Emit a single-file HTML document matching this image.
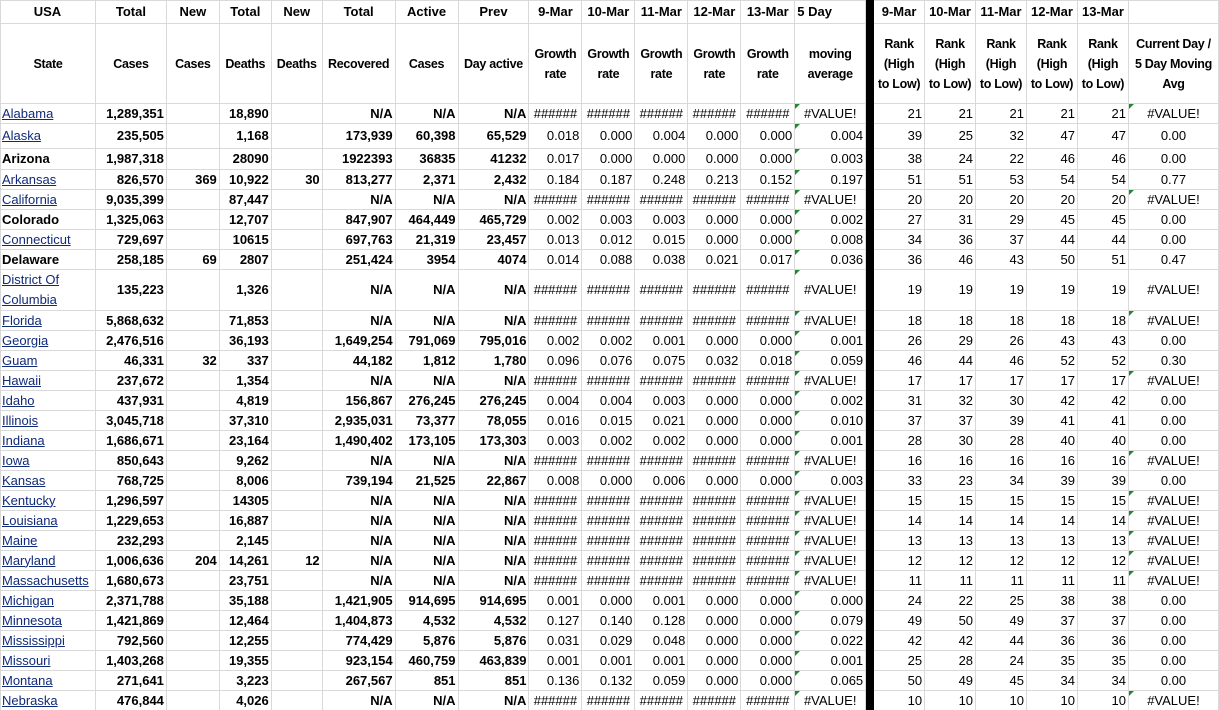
<!DOCTYPE html>
<html><head><meta charset="utf-8"><style>
html,body{margin:0;padding:0;background:#fff;width:1219px;height:710px;overflow:hidden}
table{border-collapse:collapse;table-layout:fixed;font-family:"Liberation Sans",Arial,sans-serif;font-size:13px;color:#000}
td{border:1px solid #d9d9d9;height:19px;padding:0 2px 0 2px;text-align:right;white-space:nowrap;overflow:hidden;line-height:18px;position:relative}
tr.h1 td{height:22px;text-align:center;font-weight:bold}
tr.h2 td{height:79px;text-align:center;font-weight:bold;line-height:20px;font-size:12.5px;letter-spacing:-0.3px;padding:0}
td:nth-child(1){text-align:left;padding-left:1px}
td:nth-child(n+2):nth-child(-n+8){font-weight:bold}
td:nth-child(15){background:#000;border-color:#000;padding:0}
td:nth-child(21){text-align:center}
td.c{text-align:center}
td.v{text-align:center}
tr.d td:nth-child(14)::before{content:"";position:absolute;left:0;top:0;border-top:5px solid #1e8a2e;border-right:5px solid transparent}
td.g::before{content:"";position:absolute;left:0;top:0;border-top:5px solid #1e8a2e;border-right:5px solid transparent}
a{color:#102a7a;text-decoration:underline}
td.b{font-weight:bold}
tr.r2 td{height:24px}
tr.r3 td{height:20px}
tr.dc td{height:40px;white-space:normal;line-height:20px}
</style></head><body>
<table>
<colgroup><col style="width:95px"><col style="width:71px"><col style="width:53px"><col style="width:52px"><col style="width:51px"><col style="width:73px"><col style="width:63px"><col style="width:71px"><col style="width:53px"><col style="width:53px"><col style="width:53px"><col style="width:53px"><col style="width:54px"><col style="width:71px"><col style="width:8px"><col style="width:51px"><col style="width:51px"><col style="width:51px"><col style="width:51px"><col style="width:51px"><col style="width:90px"></colgroup>
<tr class="h1"><td style="text-align:center">USA</td><td>Total</td><td>New</td><td>Total</td><td>New</td><td>Total</td><td>Active</td><td>Prev</td><td>9-Mar</td><td>10-Mar</td><td>11-Mar</td><td>12-Mar</td><td>13-Mar</td><td style="text-align:left">5 Day</td><td></td><td>9-Mar</td><td>10-Mar</td><td>11-Mar</td><td>12-Mar</td><td>13-Mar</td><td></td></tr>
<tr class="h2"><td style="text-align:center">State</td><td>Cases</td><td>Cases</td><td>Deaths</td><td>Deaths</td><td>Recovered</td><td>Cases</td><td>Day active</td><td>Growth<br>rate</td><td>Growth<br>rate</td><td>Growth<br>rate</td><td>Growth<br>rate</td><td>Growth<br>rate</td><td>moving<br>average</td><td></td><td>Rank<br>(High<br>to Low)</td><td>Rank<br>(High<br>to Low)</td><td>Rank<br>(High<br>to Low)</td><td>Rank<br>(High<br>to Low)</td><td>Rank<br>(High<br>to Low)</td><td>Current Day /<br>5 Day Moving<br>Avg</td></tr>
<tr class="d"><td><a>Alabama</a></td><td>1,289,351</td><td></td><td>18,890</td><td></td><td>N/A</td><td>N/A</td><td>N/A</td><td class="c">######</td><td class="c">######</td><td class="c">######</td><td class="c">######</td><td class="c">######</td><td class="v">#VALUE!</td><td></td><td>21</td><td>21</td><td>21</td><td>21</td><td>21</td><td class="g">#VALUE!</td></tr>
<tr class="d r2"><td><a>Alaska</a></td><td>235,505</td><td></td><td>1,168</td><td></td><td>173,939</td><td>60,398</td><td>65,529</td><td>0.018</td><td>0.000</td><td>0.004</td><td>0.000</td><td>0.000</td><td>0.004</td><td></td><td>39</td><td>25</td><td>32</td><td>47</td><td>47</td><td>0.00</td></tr>
<tr class="d r3"><td class="b">Arizona</td><td>1,987,318</td><td></td><td>28090</td><td></td><td>1922393</td><td>36835</td><td>41232</td><td>0.017</td><td>0.000</td><td>0.000</td><td>0.000</td><td>0.000</td><td>0.003</td><td></td><td>38</td><td>24</td><td>22</td><td>46</td><td>46</td><td>0.00</td></tr>
<tr class="d"><td><a>Arkansas</a></td><td>826,570</td><td>369</td><td>10,922</td><td>30</td><td>813,277</td><td>2,371</td><td>2,432</td><td>0.184</td><td>0.187</td><td>0.248</td><td>0.213</td><td>0.152</td><td>0.197</td><td></td><td>51</td><td>51</td><td>53</td><td>54</td><td>54</td><td>0.77</td></tr>
<tr class="d"><td><a>California</a></td><td>9,035,399</td><td></td><td>87,447</td><td></td><td>N/A</td><td>N/A</td><td>N/A</td><td class="c">######</td><td class="c">######</td><td class="c">######</td><td class="c">######</td><td class="c">######</td><td class="v">#VALUE!</td><td></td><td>20</td><td>20</td><td>20</td><td>20</td><td>20</td><td class="g">#VALUE!</td></tr>
<tr class="d"><td class="b">Colorado</td><td>1,325,063</td><td></td><td>12,707</td><td></td><td>847,907</td><td>464,449</td><td>465,729</td><td>0.002</td><td>0.003</td><td>0.003</td><td>0.000</td><td>0.000</td><td>0.002</td><td></td><td>27</td><td>31</td><td>29</td><td>45</td><td>45</td><td>0.00</td></tr>
<tr class="d"><td><a>Connecticut</a></td><td>729,697</td><td></td><td>10615</td><td></td><td>697,763</td><td>21,319</td><td>23,457</td><td>0.013</td><td>0.012</td><td>0.015</td><td>0.000</td><td>0.000</td><td>0.008</td><td></td><td>34</td><td>36</td><td>37</td><td>44</td><td>44</td><td>0.00</td></tr>
<tr class="d"><td class="b">Delaware</td><td>258,185</td><td>69</td><td>2807</td><td></td><td>251,424</td><td>3954</td><td>4074</td><td>0.014</td><td>0.088</td><td>0.038</td><td>0.021</td><td>0.017</td><td>0.036</td><td></td><td>36</td><td>46</td><td>43</td><td>50</td><td>51</td><td>0.47</td></tr>
<tr class="d dc"><td><a>District Of Columbia</a></td><td>135,223</td><td></td><td>1,326</td><td></td><td>N/A</td><td>N/A</td><td>N/A</td><td class="c">######</td><td class="c">######</td><td class="c">######</td><td class="c">######</td><td class="c">######</td><td class="v">#VALUE!</td><td></td><td>19</td><td>19</td><td>19</td><td>19</td><td>19</td><td>#VALUE!</td></tr>
<tr class="d"><td><a>Florida</a></td><td>5,868,632</td><td></td><td>71,853</td><td></td><td>N/A</td><td>N/A</td><td>N/A</td><td class="c">######</td><td class="c">######</td><td class="c">######</td><td class="c">######</td><td class="c">######</td><td class="v">#VALUE!</td><td></td><td>18</td><td>18</td><td>18</td><td>18</td><td>18</td><td class="g">#VALUE!</td></tr>
<tr class="d"><td><a>Georgia</a></td><td>2,476,516</td><td></td><td>36,193</td><td></td><td>1,649,254</td><td>791,069</td><td>795,016</td><td>0.002</td><td>0.002</td><td>0.001</td><td>0.000</td><td>0.000</td><td>0.001</td><td></td><td>26</td><td>29</td><td>26</td><td>43</td><td>43</td><td>0.00</td></tr>
<tr class="d"><td><a>Guam</a></td><td>46,331</td><td>32</td><td>337</td><td></td><td>44,182</td><td>1,812</td><td>1,780</td><td>0.096</td><td>0.076</td><td>0.075</td><td>0.032</td><td>0.018</td><td>0.059</td><td></td><td>46</td><td>44</td><td>46</td><td>52</td><td>52</td><td>0.30</td></tr>
<tr class="d"><td><a>Hawaii</a></td><td>237,672</td><td></td><td>1,354</td><td></td><td>N/A</td><td>N/A</td><td>N/A</td><td class="c">######</td><td class="c">######</td><td class="c">######</td><td class="c">######</td><td class="c">######</td><td class="v">#VALUE!</td><td></td><td>17</td><td>17</td><td>17</td><td>17</td><td>17</td><td class="g">#VALUE!</td></tr>
<tr class="d"><td><a>Idaho</a></td><td>437,931</td><td></td><td>4,819</td><td></td><td>156,867</td><td>276,245</td><td>276,245</td><td>0.004</td><td>0.004</td><td>0.003</td><td>0.000</td><td>0.000</td><td>0.002</td><td></td><td>31</td><td>32</td><td>30</td><td>42</td><td>42</td><td>0.00</td></tr>
<tr class="d"><td><a>Illinois</a></td><td>3,045,718</td><td></td><td>37,310</td><td></td><td>2,935,031</td><td>73,377</td><td>78,055</td><td>0.016</td><td>0.015</td><td>0.021</td><td>0.000</td><td>0.000</td><td>0.010</td><td></td><td>37</td><td>37</td><td>39</td><td>41</td><td>41</td><td>0.00</td></tr>
<tr class="d"><td><a>Indiana</a></td><td>1,686,671</td><td></td><td>23,164</td><td></td><td>1,490,402</td><td>173,105</td><td>173,303</td><td>0.003</td><td>0.002</td><td>0.002</td><td>0.000</td><td>0.000</td><td>0.001</td><td></td><td>28</td><td>30</td><td>28</td><td>40</td><td>40</td><td>0.00</td></tr>
<tr class="d"><td><a>Iowa</a></td><td>850,643</td><td></td><td>9,262</td><td></td><td>N/A</td><td>N/A</td><td>N/A</td><td class="c">######</td><td class="c">######</td><td class="c">######</td><td class="c">######</td><td class="c">######</td><td class="v">#VALUE!</td><td></td><td>16</td><td>16</td><td>16</td><td>16</td><td>16</td><td class="g">#VALUE!</td></tr>
<tr class="d"><td><a>Kansas</a></td><td>768,725</td><td></td><td>8,006</td><td></td><td>739,194</td><td>21,525</td><td>22,867</td><td>0.008</td><td>0.000</td><td>0.006</td><td>0.000</td><td>0.000</td><td>0.003</td><td></td><td>33</td><td>23</td><td>34</td><td>39</td><td>39</td><td>0.00</td></tr>
<tr class="d"><td><a>Kentucky</a></td><td>1,296,597</td><td></td><td>14305</td><td></td><td>N/A</td><td>N/A</td><td>N/A</td><td class="c">######</td><td class="c">######</td><td class="c">######</td><td class="c">######</td><td class="c">######</td><td class="v">#VALUE!</td><td></td><td>15</td><td>15</td><td>15</td><td>15</td><td>15</td><td class="g">#VALUE!</td></tr>
<tr class="d"><td><a>Louisiana</a></td><td>1,229,653</td><td></td><td>16,887</td><td></td><td>N/A</td><td>N/A</td><td>N/A</td><td class="c">######</td><td class="c">######</td><td class="c">######</td><td class="c">######</td><td class="c">######</td><td class="v">#VALUE!</td><td></td><td>14</td><td>14</td><td>14</td><td>14</td><td>14</td><td class="g">#VALUE!</td></tr>
<tr class="d"><td><a>Maine</a></td><td>232,293</td><td></td><td>2,145</td><td></td><td>N/A</td><td>N/A</td><td>N/A</td><td class="c">######</td><td class="c">######</td><td class="c">######</td><td class="c">######</td><td class="c">######</td><td class="v">#VALUE!</td><td></td><td>13</td><td>13</td><td>13</td><td>13</td><td>13</td><td class="g">#VALUE!</td></tr>
<tr class="d"><td><a>Maryland</a></td><td>1,006,636</td><td>204</td><td>14,261</td><td>12</td><td>N/A</td><td>N/A</td><td>N/A</td><td class="c">######</td><td class="c">######</td><td class="c">######</td><td class="c">######</td><td class="c">######</td><td class="v">#VALUE!</td><td></td><td>12</td><td>12</td><td>12</td><td>12</td><td>12</td><td class="g">#VALUE!</td></tr>
<tr class="d"><td><a>Massachusetts</a></td><td>1,680,673</td><td></td><td>23,751</td><td></td><td>N/A</td><td>N/A</td><td>N/A</td><td class="c">######</td><td class="c">######</td><td class="c">######</td><td class="c">######</td><td class="c">######</td><td class="v">#VALUE!</td><td></td><td>11</td><td>11</td><td>11</td><td>11</td><td>11</td><td class="g">#VALUE!</td></tr>
<tr class="d"><td><a>Michigan</a></td><td>2,371,788</td><td></td><td>35,188</td><td></td><td>1,421,905</td><td>914,695</td><td>914,695</td><td>0.001</td><td>0.000</td><td>0.001</td><td>0.000</td><td>0.000</td><td>0.000</td><td></td><td>24</td><td>22</td><td>25</td><td>38</td><td>38</td><td>0.00</td></tr>
<tr class="d"><td><a>Minnesota</a></td><td>1,421,869</td><td></td><td>12,464</td><td></td><td>1,404,873</td><td>4,532</td><td>4,532</td><td>0.127</td><td>0.140</td><td>0.128</td><td>0.000</td><td>0.000</td><td>0.079</td><td></td><td>49</td><td>50</td><td>49</td><td>37</td><td>37</td><td>0.00</td></tr>
<tr class="d"><td><a>Mississippi</a></td><td>792,560</td><td></td><td>12,255</td><td></td><td>774,429</td><td>5,876</td><td>5,876</td><td>0.031</td><td>0.029</td><td>0.048</td><td>0.000</td><td>0.000</td><td>0.022</td><td></td><td>42</td><td>42</td><td>44</td><td>36</td><td>36</td><td>0.00</td></tr>
<tr class="d"><td><a>Missouri</a></td><td>1,403,268</td><td></td><td>19,355</td><td></td><td>923,154</td><td>460,759</td><td>463,839</td><td>0.001</td><td>0.001</td><td>0.001</td><td>0.000</td><td>0.000</td><td>0.001</td><td></td><td>25</td><td>28</td><td>24</td><td>35</td><td>35</td><td>0.00</td></tr>
<tr class="d"><td><a>Montana</a></td><td>271,641</td><td></td><td>3,223</td><td></td><td>267,567</td><td>851</td><td>851</td><td>0.136</td><td>0.132</td><td>0.059</td><td>0.000</td><td>0.000</td><td>0.065</td><td></td><td>50</td><td>49</td><td>45</td><td>34</td><td>34</td><td>0.00</td></tr>
<tr class="d"><td><a>Nebraska</a></td><td>476,844</td><td></td><td>4,026</td><td></td><td>N/A</td><td>N/A</td><td>N/A</td><td class="c">######</td><td class="c">######</td><td class="c">######</td><td class="c">######</td><td class="c">######</td><td class="v">#VALUE!</td><td></td><td>10</td><td>10</td><td>10</td><td>10</td><td>10</td><td class="g">#VALUE!</td></tr>
</table>
</body></html>
